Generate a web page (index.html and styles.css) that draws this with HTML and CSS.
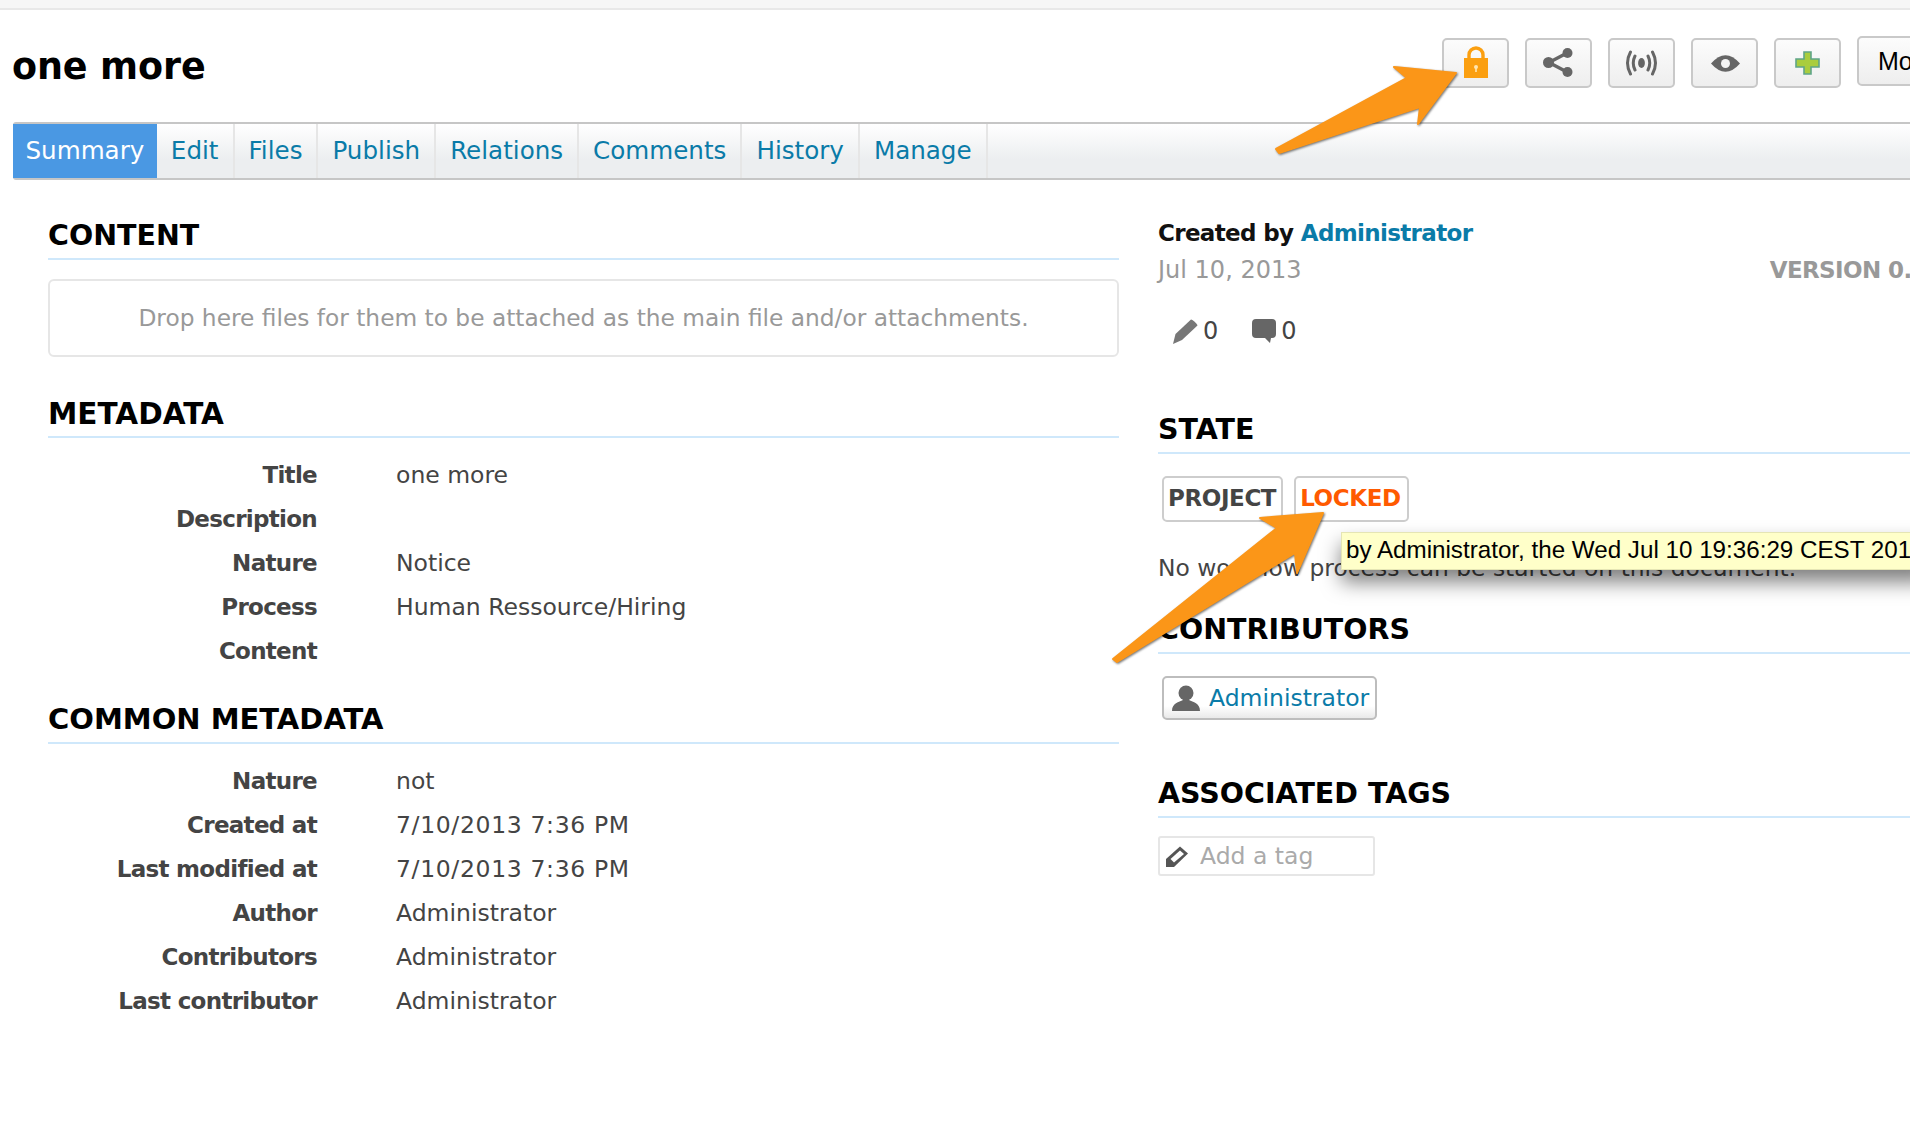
FILE: index.html
```html
<!DOCTYPE html>
<html lang="en">
<head>
<meta charset="utf-8">
<title>one more</title>
<link rel="stylesheet" href="styles.css">
</head>
<body>
<div class="page">
  <div class="strip"></div>
  <header class="head">
    <h1 class="title">one more</h1>
    <div class="tools">
      <button class="tool"><svg class="ic-lock" viewBox="0 0 24 32"><path d="M5 14V9a7 7 0 0 1 14 0v5" fill="none" stroke="#fb9f10" stroke-width="3.4"/><rect y="12" width="24" height="20" fill="#fb9f10"/><circle cx="12" cy="21" r="2" fill="#ffe6b0"/><rect x="11.2" y="21" width="1.6" height="5" fill="#ffe6b0"/></svg></button>
      <button class="tool"><svg class="ic-share" viewBox="0 0 30 29"><path d="M24 5L6 14.5L24 24" fill="none" stroke="#666" stroke-width="3.4"/><circle cx="24.5" cy="5" r="5" fill="#666"/><circle cx="5.5" cy="14.5" r="5.5" fill="#666"/><circle cx="24.5" cy="24" r="5" fill="#666"/></svg></button>
      <button class="tool"><svg class="ic-signal" viewBox="0 0 33 26" fill="none" stroke="#666" stroke-width="3" stroke-linecap="round"><ellipse cx="16.5" cy="13" rx="3.4" ry="5" fill="#666" stroke="none"/><path d="M10 6Q6.5 13 10 20M23 6Q26.500 13 23 20M5.500 2Q-0.500 13 5.500 24M27.500 2Q33.500 13 27.500 24"/></svg></button>
      <button class="tool"><svg class="ic-eye" viewBox="0 0 29 17"><path d="M0 8.500Q14.500 -8 29 8.500Q14.500 25 0 8.500Z" fill="#666"/><circle cx="14.500" cy="8.500" r="4.500" fill="#f4f4f4"/></svg></button>
      <button class="tool"><svg class="ic-plus" viewBox="0 0 25 24"><path d="M9 1h7v7h8v8h-8v7H9v-7H1V8h8z" fill="#a9cd3e" stroke="#5fa588" stroke-width="1.600"/></svg></button>
      <button class="tool tool-more">More</button>
    </div>
  </header>
  <nav class="tabs">
    <a class="tab tab-on">Summary</a>
    <a class="tab">Edit</a>
    <a class="tab">Files</a>
    <a class="tab">Publish</a>
    <a class="tab">Relations</a>
    <a class="tab">Comments</a>
    <a class="tab">History</a>
    <a class="tab">Manage</a>
  </nav>
  <main class="columns">
    <section class="left">
      <h2 class="sec">CONTENT</h2>
      <div class="drop">Drop here files for them to be attached as the main file and/or attachments.</div>
      <h2 class="sec sec-meta">METADATA</h2>
      <dl class="props">
        <div class="prop"><dt>Title</dt><dd>one more</dd></div>
        <div class="prop"><dt>Description</dt><dd></dd></div>
        <div class="prop"><dt>Nature</dt><dd>Notice</dd></div>
        <div class="prop"><dt>Process</dt><dd>Human Ressource/Hiring</dd></div>
        <div class="prop"><dt>Content</dt><dd></dd></div>
      </dl>
      <h2 class="sec sec-common">COMMON METADATA</h2>
      <dl class="props">
        <div class="prop"><dt>Nature</dt><dd>not</dd></div>
        <div class="prop"><dt>Created at</dt><dd class="stamp">7/10/2013 7:36 PM</dd></div>
        <div class="prop"><dt>Last modified at</dt><dd class="stamp">7/10/2013 7:36 PM</dd></div>
        <div class="prop"><dt>Author</dt><dd>Administrator</dd></div>
        <div class="prop"><dt>Contributors</dt><dd>Administrator</dd></div>
        <div class="prop"><dt>Last contributor</dt><dd>Administrator</dd></div>
      </dl>
    </section>
    <aside class="right">
      <div class="created">Created by <a class="link">Administrator</a></div>
      <div class="dateline"><span>Jul 10, 2013</span><b class="version">VERSION 0.0</b></div>
      <div class="counts">
        <svg class="ic-pen" viewBox="0 0 25 25"><path d="M0 25L2.500 15L18 0.500C20 1 23.500 4 24.500 6.500L9 21Z" fill="#777"/></svg><span class="num">0</span>
        <svg class="ic-com" viewBox="0 0 24 24"><path d="M4 0h16a4 4 0 0 1 4 4v11a4 4 0 0 1-4 4h-1l-1 5-5-5H4a4 4 0 0 1-4-4V4a4 4 0 0 1 4-4z" fill="#666"/></svg><span class="num">0</span>
      </div>
      <h2 class="sec sec-state">STATE</h2>
      <div class="badges">
        <span class="badge badge-project">PROJECT</span>
        <span class="badge badge-locked">LOCKED</span>
        <div class="tip">by Administrator, the Wed Jul 10 19:36:29 CEST 2013</div>
      </div>
      <p class="note">No workflow process can be started on this document.</p>
      <h2 class="sec sec-contrib">CONTRIBUTORS</h2>
      <a class="person"><svg class="ic-person" viewBox="0 0 28 26"><circle cx="14" cy="8" r="7.500" fill="#666"/><path d="M0 26C0 18 7 17 11 15h6c4 2 11 3 11 11z" fill="#666"/></svg>Administrator</a>
      <h2 class="sec sec-tags">ASSOCIATED TAGS</h2>
      <div class="taginput"><svg class="ic-tag" viewBox="0 0 23 22"><path d="M0 22V14L14 1.500L22 8.500L8 22Z" fill="#555"/><path d="M4.500 14L14 5.500L18 9L8 17.500Z" fill="#fff"/></svg><span>Add a tag</span></div>
    </aside>
  </main>
  <svg class="arrows" viewBox="0 0 1910 1126">
    <polygon points="1276,149 1407,78 1394,67 1456,73 1418,124 1420,107 1279,153"/>
    <polygon points="1113,659 1277,528 1260,518 1323,513 1297,573 1295,553 1117,662"/>
  </svg>
</div>
</body>
</html>
```
FILE: styles.css
```css
* { box-sizing: border-box; }
html, body { margin: 0; padding: 0; background: #fff; }
body { font-family: "DejaVu Sans", "Liberation Sans", sans-serif; color: #444; }
.page { position: relative; width: 1910px; height: 1126px; overflow: hidden; }
.strip { height: 10px; background: #f6f6f6; border-bottom: 2px solid #e8e8e8; }

.head { display: flex; height: 112px; padding: 28px 0 0 12px; }
.title { flex: 0 0 1430px; margin: 0; font-size: 36.500px; line-height: 58px; font-weight: bold; letter-spacing: -0.1px; color: #000; }
.tools { display: flex; gap: 16px; flex: none; align-items: flex-start; }
.tool { width: 67px; height: 50px; flex: none; padding: 0; display: flex; align-items: center; justify-content: center; background: linear-gradient(#fcfcfc, #eeeeee); border: 2px solid #c9c9c9; border-radius: 5px; }
.tool-more { width: 110px; margin-top: -2px; justify-content: flex-start; padding-left: 19px; font: 25px "Liberation Sans", sans-serif; color: #000; }
.ic-lock { width: 24px; height: 32px; margin-top: -2px; }
.ic-share { width: 30px; height: 29px; margin: -2px 2px 0 0; }
.ic-signal { width: 33px; height: 26px; }
.ic-eye { width: 29px; height: 17px; margin-left: 2px; }
.ic-plus { width: 25px; height: 24px; }

.tabs { display: flex; height: 58px; margin-left: 13px; border-top: 2px solid #c6c6c6; border-bottom: 2px solid #c6c6c6; border-radius: 3px 0 0 3px; background: linear-gradient(#ffffff, #eceef0 65%); }
.tab { padding: 0 14px; font-size: 24.600px; line-height: 54px; color: #0a7ba8; border-right: 2px solid #e6e6e6; }
.tab-on { padding: 0 12.500px; background: #4a98e3; color: #fff; border-right: 0; }

.columns { display: grid; grid-template-columns: 1071px 800px; column-gap: 39px; padding: 36px 0 0 48px; }
.left { padding-top: 2px; }
.sec { margin: 0; height: 42px; padding-bottom: 4px; font-size: 28.500px; line-height: 36px; font-weight: bold; color: #000; border-bottom: 2px solid #cfe8fb; }
.drop { margin-top: 19px; height: 78px; border: 2px solid #e6e6e6; border-radius: 6px; text-align: center; font-size: 23.300px; line-height: 74px; color: #999; }
.sec-meta { margin-top: 39px; font-size: 29.500px; }
.sec-common { margin-top: 29px; padding-bottom: 5px; font-size: 29px; line-height: 34px; }
.props { margin: 15px 0 0; }
.prop { display: grid; grid-template-columns: 269px 1fr; column-gap: 79px; height: 44px; line-height: 44px; }
.prop dt { font-size: 23px; font-weight: bold; letter-spacing: -0.700px; text-align: right; color: #444; }
.prop dd { margin: 0; font-size: 23.500px; color: #444; }
.prop .stamp { letter-spacing: 0.650px; }

.created { height: 34px; font-size: 23px; line-height: 35px; font-weight: bold; letter-spacing: -0.650px; color: #111; }
.link { color: #0a7ba8; }
.dateline { display: flex; justify-content: space-between; height: 34px; margin-top: 3px; padding-right: 31px; font-size: 24px; line-height: 34px; color: #999; }
.version { font-size: 23px; font-weight: bold; letter-spacing: -0.600px; color: #999; }
.counts { display: flex; align-items: center; height: 34px; margin-top: 27px; padding-left: 15px; font-size: 24px; color: #444; }
.ic-pen { width: 25px; height: 25px; }
.ic-com { width: 24px; height: 24px; margin-left: 34px; }
.num { margin-left: 5px; }
.sec-state { margin-top: 64px; }
.badges { position: relative; display: flex; gap: 11px; height: 46px; margin: 22px 0 0 4px; }
.badge { display: block; height: 46px; padding: 0 5px 0 4px; border: 2px solid #cdcdcd; border-radius: 5px; font-size: 23px; line-height: 41px; font-weight: bold; letter-spacing: -0.400px; }
.badge-project { color: #444; }
.badge-locked { padding-right: 6px; color: #ff5a00; }
.tip { position: absolute; left: 179px; top: 56px; height: 38px; padding: 0 4px; white-space: nowrap; background: #ffffc9; border: 1px solid #e5e5b4; box-shadow: 0 12px 20px rgba(0,0,0,.5); font: 24.200px/34px "Liberation Sans", sans-serif; color: #000; z-index: 2; }
.note { margin: 29px 0 0; height: 34px; font-size: 23.400px; line-height: 34px; color: #444; }
.sec-contrib { margin-top: 27px; }
.person { display: inline-flex; align-items: center; gap: 9px; height: 44px; margin: 22px 0 0 4px; padding: 0 6px 0 8px; background: linear-gradient(#ffffff 70%, #e9e9e9); border: 2px solid #bdbdbd; border-radius: 5px; font-size: 23.500px; color: #0a7ba8; }
.ic-person { width: 28px; height: 26px; }
.sec-tags { margin-top: 56px; }
.taginput { display: flex; align-items: center; gap: 11px; width: 217px; height: 40px; margin-top: 18px; padding-left: 6px; border: 2px solid #e6e6e6; border-radius: 3px; font-size: 23.500px; line-height: 34px; color: #aaa; }
.ic-tag { width: 23px; height: 22px; }

.arrows { position: absolute; left: 0; top: 0; width: 1910px; height: 1126px; pointer-events: none; z-index: 3; }
.arrows polygon { fill: #fb9618; stroke: #fb9618; stroke-width: 2; stroke-linejoin: round; filter: drop-shadow(1px 1px 1px rgba(0,0,0,.55)); }
```
